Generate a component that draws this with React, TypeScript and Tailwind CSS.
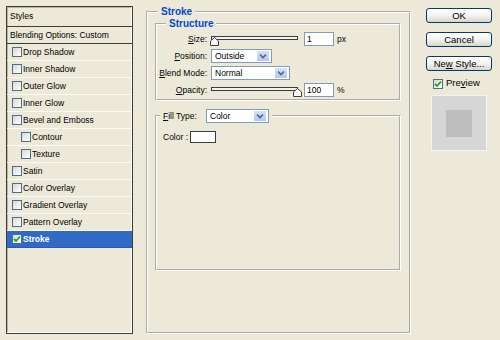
import React from "react";

const styleRows = [
  { name: "Drop Shadow" },
  { name: "Inner Shadow" },
  { name: "Outer Glow" },
  { name: "Inner Glow" },
  { name: "Bevel and Emboss" },
  { name: "Contour", sub: true },
  { name: "Texture", sub: true },
  { name: "Satin" },
  { name: "Color Overlay" },
  { name: "Gradient Overlay" },
  { name: "Pattern Overlay" },
  { name: "Stroke", selected: true },
];

function CheckBox({ checked = false }: { checked?: boolean }) {
  return (
    <span className="flex h-[10px] w-[10px] shrink-0 items-center justify-center border border-[#4e6d8c] bg-linear-to-br from-[#d9d9d2] to-white">
      {checked && (
        <svg width="8" height="8" viewBox="0 0 8 8">
          <path d="M1 4 L3 6 L7 1.5" fill="none" stroke="#21a121" strokeWidth="1.8" />
        </svg>
      )}
    </span>
  );
}

function Select({ value, width }: { value: string; width: string }) {
  return (
    <div className={`flex h-[14px] items-center border border-[#7f9db9] bg-white ${width}`}>
      <span className="flex-1 pl-[3px] text-[8.5px] leading-none">{value}</span>
      <span className="mr-px flex h-[12px] w-[14px] items-center justify-center rounded-[1px] border border-white bg-linear-to-b from-[#d6e2fc] to-[#b2c7f5]">
        <svg width="8" height="6" viewBox="0 0 8 6">
          <path d="M1 1.5 L4 4.5 L7 1.5" fill="none" stroke="#4d6185" strokeWidth="1.6" />
        </svg>
      </span>
    </div>
  );
}

function Slider({ atEnd }: { atEnd?: boolean }) {
  return (
    <div className="relative h-[14px] w-[92px]">
      <div className="absolute left-[1px] right-[4px] top-[4px] h-[4px] border border-[#3c3c3c] bg-[#f4f3ee]" />
      <svg
        width="9"
        height="9"
        viewBox="0 0 9 9"
        className={`absolute top-[5px] ${atEnd ? "right-0" : "left-0"}`}
      >
        <path d="M0.5 8.5 L0.5 4 L4.5 0.5 L8.5 4 L8.5 8.5 Z" fill="#fff" stroke="#3c3c3c" />
      </svg>
    </div>
  );
}

function NumberBox({ value }: { value: string }) {
  return (
    <div className="ml-[2px] flex h-[14px] w-[30px] items-center border border-[#7f9db9] bg-white pl-[2px] text-[8.5px] leading-none">
      {value}
    </div>
  );
}

function Button({ children }: { children: React.ReactNode }) {
  return (
    <div className="flex h-[15px] w-[66px] items-center justify-center rounded-[3px] border border-[#003c74] bg-linear-to-b from-white via-[#f3f3ef] to-[#d9d5c9] text-[9.5px] leading-none">
      {children}
    </div>
  );
}

export default function App() {
  return (
    <div className="flex h-[340px] w-[500px] items-start bg-[#ece9d8] font-['Liberation_Sans',Arial,sans-serif] text-black">
      {/* Styles list */}
      <div className="ml-[6px] mt-[6px] flex h-[328px] w-[127px] flex-col border border-[#3c3c3c] shadow-[inset_-1px_-1px_0_#fff,inset_1px_1px_0_#b8b4a4]">
        <div className="flex h-[20px] items-center border-b border-[#3c3c3c] pl-[3px] text-[8.5px]">Styles</div>
        <div className="flex h-[17px] items-center border-b border-[#3c3c3c] pl-[3px] text-[8.5px]">
          Blending Options: Custom
        </div>
        {styleRows.map((row) => (
          <div
            key={row.name}
            className={`flex h-[17px] items-center gap-px border-b text-[8.5px] ${
              row.sub ? "pl-[14px]" : "pl-[5px]"
            } ${
              row.selected
                ? "border-[#2a5bb0] bg-[#316ac5] font-bold text-white"
                : "border-white/80"
            }`}
          >
            <CheckBox checked={row.selected} />
            <span>{row.name}</span>
          </div>
        ))}
      </div>

      {/* Stroke group */}
      <fieldset className="ml-[13px] mt-[6px] h-[328px] w-[265px] border-2 border-white px-[7px] [--tw-border-style:groove] [border-style:groove]">
        <legend className="ml-[3px] px-[3px] text-[10px] font-bold leading-[12px] text-[#0046d5]">Stroke</legend>

        <fieldset className="w-[246px] border-2 border-white pb-[2px] pl-[2px] pt-[2px] [--tw-border-style:groove] [border-style:groove]">
          <legend className="ml-[7px] px-[3px] text-[10px] font-bold leading-[12px] text-[#0046d5]">Structure</legend>
          <div className="flex flex-col gap-[3px] text-[8.5px]">
            <div className="flex h-[14px] items-center">
              <span className="w-[48px] text-right">
                <u>S</u>ize:
              </span>
              <span className="ml-[3px]">
                <Slider />
              </span>
              <NumberBox value="1" />
              <span className="ml-[3px]">px</span>
            </div>
            <div className="flex h-[14px] items-center">
              <span className="w-[48px] text-right">
                <u>P</u>osition:
              </span>
              <span className="ml-[4px]">
                <Select value="Outside" width="w-[61px]" />
              </span>
            </div>
            <div className="flex h-[14px] items-center">
              <span className="w-[48px] whitespace-nowrap text-right">
                <u>B</u>lend Mode:
              </span>
              <span className="ml-[4px]">
                <Select value="Normal" width="w-[79px]" />
              </span>
            </div>
            <div className="flex h-[14px] items-center">
              <span className="w-[48px] text-right">
                <u>O</u>pacity:
              </span>
              <span className="ml-[3px]">
                <Slider atEnd />
              </span>
              <NumberBox value="100" />
              <span className="ml-[3px]">%</span>
            </div>
          </div>
        </fieldset>

        <fieldset className="mt-[8px] h-[162px] w-[246px] border-2 border-white pl-[2px] [--tw-border-style:groove] [border-style:groove]">
          <legend className="ml-[1px] flex items-center px-[3px] text-[8.5px]">
            <span className="w-[43px]">
              <u>F</u>ill Type:
            </span>
            <Select value="Color" width="w-[63px]" />
          </legend>
          <div className="flex items-center pl-[4px] pt-[8px] text-[8.5px]">
            <span className="w-[27px] shrink-0 whitespace-nowrap">Color :</span>
            <span className="h-[12px] w-[26px] border border-[#3c3c3c] bg-white" />
          </div>
        </fieldset>
      </fieldset>

      {/* Buttons */}
      <div className="ml-[15px] mt-[8px] flex w-[66px] flex-col">
        <div className="flex flex-col gap-[9px]">
          <Button>OK</Button>
          <Button>Cancel</Button>
          <Button>
            <span>
              Ne<u>w</u> Style...
            </span>
          </Button>
        </div>
        <div className="mt-[7px] flex h-[11px] items-center gap-[3px] pl-[7px] text-[9.5px]">
          <CheckBox checked />
          <span>
            Pre<u>v</u>iew
          </span>
        </div>
        <div className="ml-[5px] mt-[6px] flex h-[56px] w-[56px] items-center justify-center border border-[#f4f3ee] bg-[#d6d6d6]">
          <div className="h-[27px] w-[26px] bg-[#bdbdbd]" />
        </div>
      </div>
    </div>
  );
}
